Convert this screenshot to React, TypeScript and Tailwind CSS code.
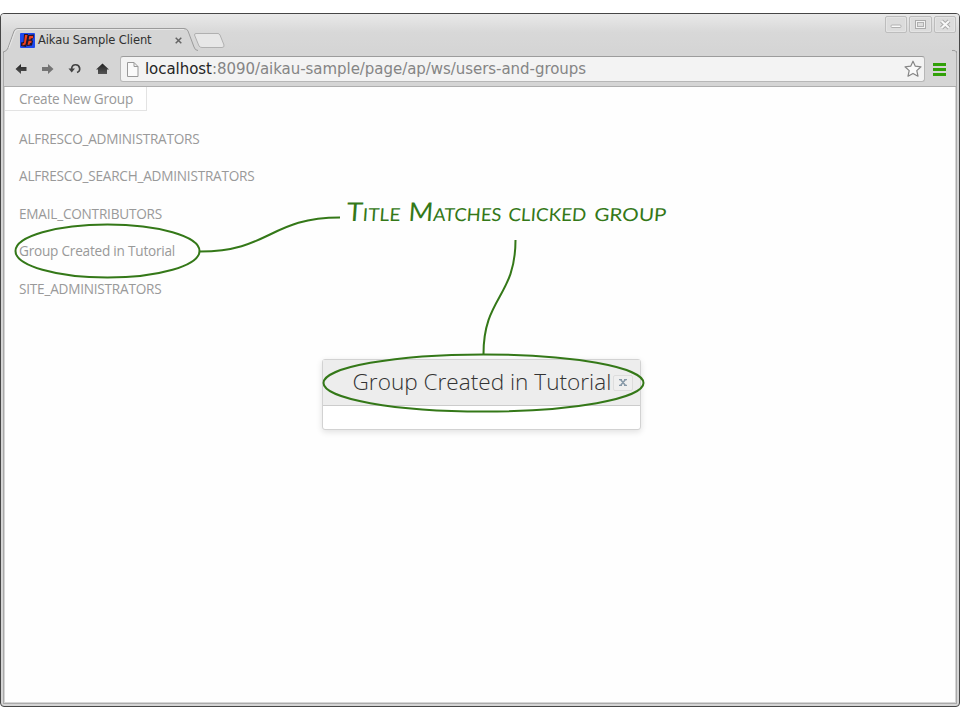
import React from "react";

const groups = [
  { name: "ALFRESCO_ADMINISTRATORS", width: 180 },
  { name: "ALFRESCO_SEARCH_ADMINISTRATORS", width: 235 },
  { name: "EMAIL_CONTRIBUTORS", width: 142 },
  { name: "Group Created in Tutorial", width: 156 },
  { name: "SITE_ADMINISTRATORS", width: 142 },
];

function WindowButton({ children, wide }: { children: React.ReactNode; wide?: boolean }) {
  return (
    <div className={`${wide ? "w-[23px]" : "w-[22px]"} h-[17px] rounded-[2px] border border-[#bdbdbd] bg-[#dcdcdc] shadow-[inset_0_0_0_1px_#e4e4e4]`}>
      <svg className="block" width="20" height="15" viewBox="0 0 20 15" fill="none">{children}</svg>
    </div>
  );
}

function TitleBar() {
  return (
    <header className="relative flex h-[37px] bg-gradient-to-b from-[#e9e9e9] via-[#d8d8d8] to-[#d5d5d5]">
      <svg className="absolute left-0 top-0" width="958" height="39" viewBox="1 14 958 39" fill="none">
        <path d="M3.5 53V51.5Q7 51 8 48L14 31Q15 28.5 18 28.5H184Q187 28.5 188 31L194 47Q195 50.5 199 50.5H954Q956.5 50.5 956.5 53Z" fill="#d5d5d5" />
        <path d="M3.5 53V52Q7 51 8 48L14 31Q15 28.5 18 28.5H184Q187 28.5 188 31L194 47Q195 50.5 198 50.5M952 50.5Q956.5 50 956.5 53" stroke="#9b9b9b" />
        <path d="M9 48L15 32Q16 29.5 18 29.5H184" stroke="#e7e7e7" />
        <path d="M196 33.5H218Q219 33.5 220 35L224 45Q224.500 47.500 222 47.500H202Q200 47.500 199 46L194.500 35Q194.500 33.500 196 33.500Z" fill="#e7e7e7" stroke="#b0b0b0" />
      </svg>
      <div className="relative flex h-full w-[196px] items-center pl-[19px] pt-[15px]">
        <svg width="15" height="15" viewBox="0 0 15 15">
          <rect width="15" height="15" rx="1" fill="#1d49ee" />
          <path d="M4 1H8V9L6 14L1 13V9.500L3.500 9ZM8 2L14 1.500L13.500 5L12 7L13 8L12 12.500L7 13Z" fill="#24152d" />
          <path d="M5 2H7.500L5.500 11.500L2.500 12.500V10.500L4 10ZM9.300 3H13V5.200H10.800L10.500 6.500H8.600ZM8.600 7.800H11.700L11.300 10H9.900L9.600 11.800H7.600Z" fill="#f2401c" />
        </svg>
        <span className="ml-[3px] w-[128px] whitespace-nowrap font-['DejaVu_Sans',sans-serif] text-[11.5px] leading-4 tracking-[-0.11px] text-[#303030]">Aikau Sample Client</span>
        <svg className="ml-[9px]" width="7" height="7" viewBox="0 0 7 7"><path d="M.7.7L6.300 6.300M6.300.7L.7 6.300" stroke="#646464" strokeWidth="1.500" /></svg>
      </div>
      <div className="relative ml-auto flex gap-[2px] pr-[3px] pt-[2px]">
        <WindowButton><rect x="5" y="8" width="10" height="2.500" rx="1" stroke="#b0b0b0" fill="#fafafa" /></WindowButton>
        <WindowButton wide><rect x="6.500" y="4.500" width="8" height="6" stroke="#aaa" strokeWidth="3" /><rect x="6.500" y="4.500" width="8" height="6" stroke="#f3f3f3" /><rect x="7.500" y="5.500" width="6" height="4" stroke="#aaa" strokeWidth=".7" fill="#ddd" /></WindowButton>
        <WindowButton><path d="M6.500 4L14 11M14 4L6.500 11" stroke="#a7a7a7" strokeWidth="4" /><path d="M6.500 4L14 11M14 4L6.500 11" stroke="#f7f7f7" strokeWidth="2.200" /></WindowButton>
      </div>
    </header>
  );
}

function Toolbar() {
  return (
    <div className="flex h-9 shrink-0 items-center border-b border-[#aeaeae] bg-[#d5d5d5] pl-[11px]">
      <svg className="mr-[10px] shrink-0" width="95" height="16" viewBox="0 0 95 16">
        <defs>
          <linearGradient id="dark" x2="0" y2="1"><stop stopColor="#222" /><stop offset="1" stopColor="#555" /></linearGradient>
        </defs>
        <path d="M.5 8L6 3V6H11.500V10H6V13Z" fill="url(#dark)" />
        <path d="M38.500 8L33 3V6H27V10H33V13Z" fill="#747474" />
        <path d="M56.700 8V7.200A4 4 0 1 1 62 11.500" fill="none" stroke="#444" strokeWidth="1.700" />
        <path d="M53.500 7.500H60L56.700 11.500Z" fill="#444" />
        <path d="M81 8.500L87.500 2.500L94 8.500H92V13H83V8.500Z" fill="url(#dark)" />
      </svg>
      <div className="flex h-[26px] w-[805px] shrink-0 items-center rounded-[3px] border border-[#b7b7b7] border-t-[#9c9c9c] bg-[#f3f3f3] pl-[6px] pr-[2px]">
        <svg className="mt-px shrink-0" width="12" height="15" viewBox="0 0 12 15"><path d="M.5.5H7L11 4.500V14.500H.5ZM7 .5V4.500H11" fill="#fafafa" stroke="#999" /></svg>
        <span className="ml-[6px] whitespace-nowrap pt-px font-['DejaVu_Sans',sans-serif] text-[15px] leading-5 tracking-[-0.045px] text-[#858585]"><span className="text-[#252525]">localhost</span>:8090/aikau-sample/page/ap/ws/users-and-groups</span>
        <svg className="ml-auto shrink-0" width="18" height="18" viewBox="0 0 18 18"><path d="M9 1.200L11.300 6.200L17 6.800L12.800 10.600L14 16.200L9 13.400L4 16.200L5.200 10.600L1 6.800L6.700 6.200Z" fill="#fafafa" stroke="#858585" strokeWidth="1.200" strokeLinejoin="round" /></svg>
      </div>
      <svg className="ml-2 mt-px shrink-0" width="13" height="13" viewBox="0 0 13 13"><path d="M0 1.500H13M0 6.500H13M0 11.500H13" stroke="#31a008" strokeWidth="3" /></svg>
    </div>
  );
}

function GroupDialog() {
  return (
    <section className="absolute left-[317px] top-[272px] h-[71px] w-[319px] rounded-[3px] border border-[#d2d2d2] bg-white shadow-[0_2px_6px_rgba(0,0,0,.12)]">
      <div className="flex h-[46px] items-center border-b border-[#ccc] bg-[#ededed] pl-[29.5px]">
        <h2 className="w-[260.5px] whitespace-nowrap pb-[2px] font-['Open_Sans',sans-serif] text-[22.6px] font-light leading-8 text-[#333]">Group Created in Tutorial</h2>
        <button className="flex h-4 w-5 items-center justify-center rounded-[2px] border border-[#ddd] bg-[#efefef]">
          <svg width="8" height="7" viewBox="0 0 8 7"><path d="M1.500 .5L6.500 6.500M6.500 .5L1.500 6.500M0 .5H3M5 .5H8M0 6.500H3M5 6.500H8" stroke="#8799a8" strokeWidth="1.500" /></svg>
        </button>
      </div>
    </section>
  );
}

function Annotations() {
  return (
    <svg className="pointer-events-none absolute left-0 top-0" width="960" height="720" fill="none" stroke="#347818" strokeWidth="2">
      <ellipse cx="107.500" cy="251" rx="92" ry="26.500" />
      <path d="M200 251.500C270 251.500 270 217.500 340 217.500" />
      <path d="M515.500 240C515.500 297 483.500 297 483.500 354" />
      <ellipse cx="483.500" cy="383" rx="160" ry="28.500" />
      <g fill="#347818" stroke="none" fontFamily="Lato, sans-serif" fontSize="26" fontVariant="small-caps" transform="translate(0 221) skewX(-4)">
        <text x="346" textLength="54" lengthAdjust="spacingAndGlyphs">Title</text>
        <text x="408" textLength="93" lengthAdjust="spacingAndGlyphs">Matches</text>
        <text x="508" textLength="78" lengthAdjust="spacingAndGlyphs">clicked</text>
        <text x="594" textLength="72" lengthAdjust="spacingAndGlyphs">group</text>
      </g>
    </svg>
  );
}

export default function App() {
  return (
    <div className="relative h-[720px] w-[960px] overflow-hidden bg-white pt-[13px]">
      <div className="flex h-[694px] flex-col overflow-hidden rounded-[4px] border border-[#464646] bg-[#d5d5d5]">
        <TitleBar />
        <div className="mx-[2px] mb-[2px] flex min-h-0 flex-1 flex-col border-x border-b border-[#aaa]">
          <Toolbar />
          <main className="relative mx-px mb-px flex-1 bg-[#fefefe] font-['Open_Sans',sans-serif] text-[13.6px] tracking-[-0.22px] text-[#999]">
            <button className="flex h-6 w-[142px] items-center border-b border-r border-[#e3e3e3] bg-white pl-[14px] pt-[2px] text-left">Create New Group</button>
            <ul className="flex flex-col pl-[14px] pt-[9.300px]">
              {groups.map((group) => (
                <li key={group.name} className="flex h-[37.500px] items-center whitespace-nowrap" style={{ width: group.width }}>{group.name}</li>
              ))}
            </ul>
            <div className="tracking-normal"><GroupDialog /></div>
          </main>
        </div>
      </div>
      <Annotations />
    </div>
  );
}
